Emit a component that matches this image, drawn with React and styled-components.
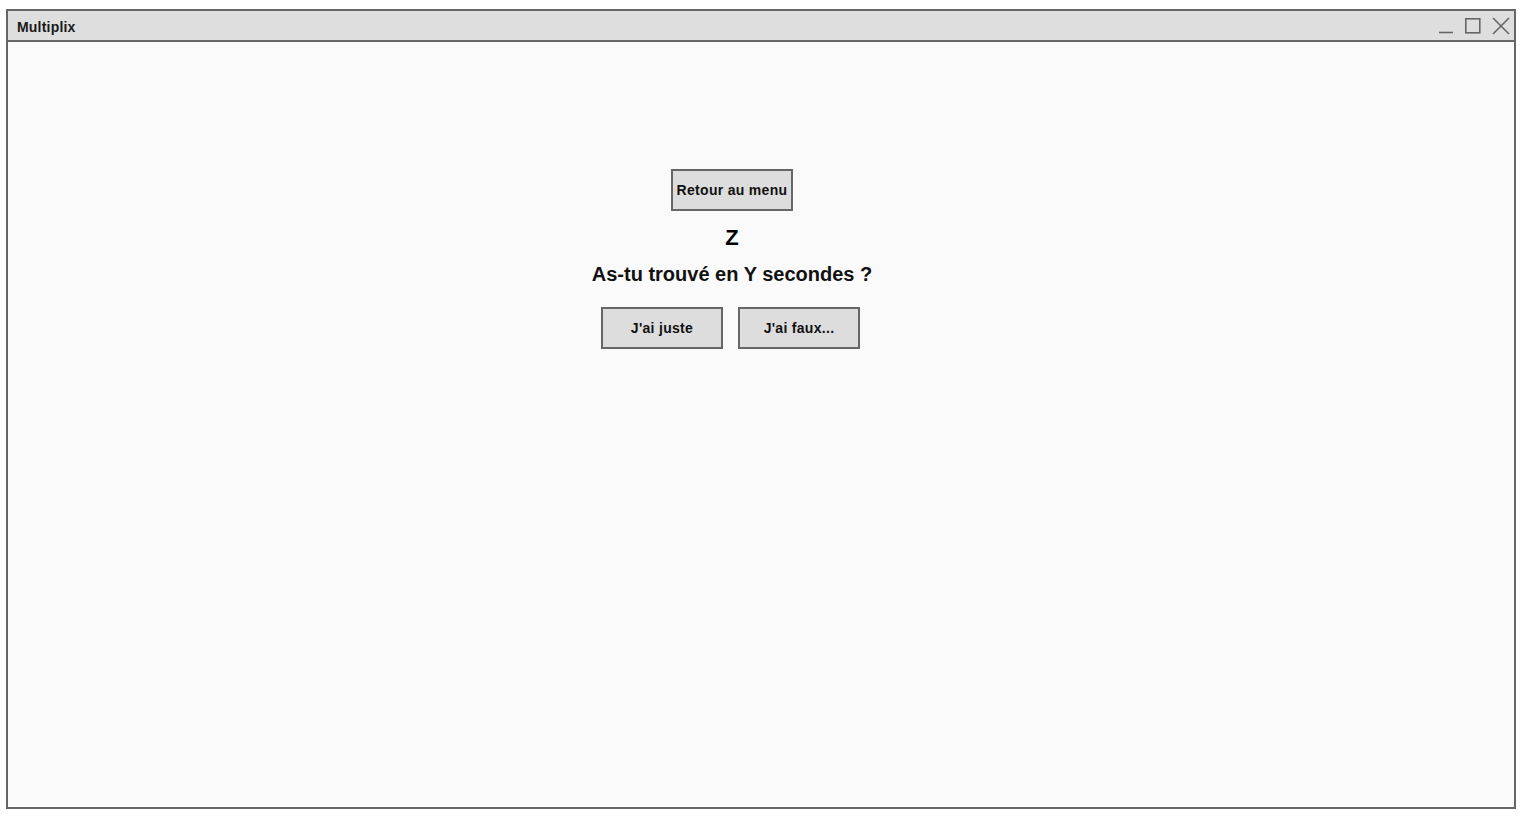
import React from "react";
import styled, { createGlobalStyle } from "styled-components";

const GlobalStyle = createGlobalStyle`
  body {
    margin: 0;
    background: #ffffff;
    font-family: "Liberation Sans", Arial, sans-serif;
  }
`;

export default function App() {
  return (
    <>
      <GlobalStyle />
      <Window>
        <TitleBar>
          <Title>Multiplix</Title>
          <Controls>
            <svg width="16" height="18" viewBox="0 0 16 18">
              <line x1="1" y1="15.5" x2="15" y2="15.5" stroke="#666" strokeWidth="1.6" />
            </svg>
            <svg width="18" height="18" viewBox="0 0 18 18">
              <rect x="1.8" y="1.8" width="14" height="14" fill="none" stroke="#666" strokeWidth="1.6" />
            </svg>
            <svg width="18" height="18" viewBox="0 0 18 18">
              <path d="M1 1 L17 17 M17 1 L1 17" stroke="#666" strokeWidth="1.6" fill="none" />
            </svg>
          </Controls>
        </TitleBar>
        <Content>
          <Button>Retour au menu</Button>
          <Answer>Z</Answer>
          <Question>As-tu trouvé en Y secondes ?</Question>
          <ButtonRow>
            <Button>J'ai juste</Button>
            <Button>J'ai faux...</Button>
          </ButtonRow>
        </Content>
      </Window>
    </>
  );
}

const Window = styled.div`
  box-sizing: border-box;
  margin: 9px 0 0 6px;
  width: 1510px;
  height: 800px;
  border: 2px solid #666666;
  background: #fafafa;
  display: flex;
  flex-direction: column;
`;

const TitleBar = styled.div`
  box-sizing: border-box;
  height: 31px;
  border-bottom: 2px solid #666666;
  background: #dedede;
  display: flex;
  align-items: center;
  justify-content: space-between;
  padding: 0 4px 0 9px;
`;

const Title = styled.div`
  font-size: 14px;
  font-weight: bold;
  letter-spacing: 0.2px;
  color: #1a1a1a;
  padding-top: 3px;
`;

const Controls = styled.div`
  display: flex;
  align-items: center;
  gap: 10px;
  padding-top: 1px;

  svg {
    display: block;
  }
`;

const Content = styled.div`
  flex: 1;
  display: flex;
  flex-direction: column;
  align-items: center;
  padding: 127px 58px 0 0;
`;

const Button = styled.button`
  box-sizing: border-box;
  width: 122px;
  height: 42px;
  border: 2px solid #666666;
  background: #dddddd;
  font-family: "Liberation Sans", Arial, sans-serif;
  font-size: 14px;
  font-weight: bold;
  letter-spacing: 0.3px;
  color: #111111;
  padding: 0;
  cursor: pointer;
`;

const Answer = styled.div`
  margin-top: 14px;
  font-size: 22px;
  line-height: 26px;
  font-weight: bold;
  color: #000000;
`;

const Question = styled.div`
  margin-top: 12px;
  font-size: 20px;
  line-height: 22px;
  font-weight: bold;
  color: #111111;
`;

const ButtonRow = styled.div`
  display: flex;
  gap: 15px;
  margin-top: 22px;
  padding-right: 3px;
`;
